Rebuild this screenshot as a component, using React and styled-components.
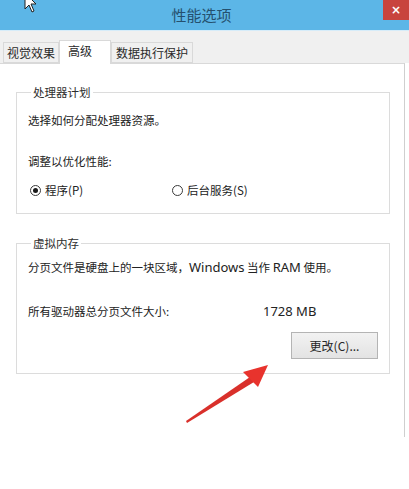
import React from "react";
import styled, { createGlobalStyle } from "styled-components";

const Global = createGlobalStyle`
  html, body { margin: 0; padding: 0; background: #ffffff; }
  body { font-family: "Noto Sans CJK SC", "Noto Sans", sans-serif; font-size: 11.5px; color: #222222; }
`;

const Window = styled.div`
  position: relative;
  width: 409px;
  height: 489px;
  background: #ffffff;
  overflow: hidden;
`;

const TitleBar = styled.div`
  height: 30px;
  background: #5cb6e7;
  border-bottom: 1px solid #d6ecf9;
  display: flex;
  align-items: center;
  justify-content: center;
  position: relative;
`;

const Title = styled.div`
  font-size: 15px;
  color: #25506e;
  line-height: 1;
  margin-left: -6px;
  margin-top: -2px;
`;

const CloseButton = styled.div`
  position: absolute;
  right: 0;
  top: 0;
  width: 26px;
  height: 20px;
  background: #c8443e;
  color: #ffffff;
  font-family: "DejaVu Sans", sans-serif;
  font-size: 12px;
  font-weight: bold;
  display: flex;
  align-items: center;
  justify-content: center;
`;

const TabStrip = styled.div`
  height: 32px;
  background: #f0f0f0;
  display: flex;
  align-items: flex-end;
  padding-left: 3px;
  position: relative;
  z-index: 1;
`;

const Tab = styled.div`
  box-sizing: border-box;
  width: ${(p) => p.$w}px;
  padding-left: ${(p) => p.$pl}px;
  height: ${(p) => (p.$active ? 24 : 21)}px;
  margin-bottom: ${(p) => (p.$active ? -1 : 0)}px;
  background: ${(p) => (p.$active ? "#ffffff" : "#f0f0f0")};
  border: 1px solid #d9d9d9;
  border-bottom: ${(p) => (p.$active ? "none" : "1px solid #d9d9d9")};
  display: flex;
  align-items: center;
  padding-bottom: ${(p) => (p.$active ? 3 : 0)}px;
  font-size: 12px;
  line-height: 1;
  color: #2a2a2a;
`;

const Panel = styled.div`
  box-sizing: border-box;
  width: 405px;
  height: 374px;
  background: #ffffff;
  border-top: 1px solid #d9d9d9;
  border-right: 1px solid #cfcfcf;
  padding: 20px 14px 0 16px;
`;

const Group = styled.fieldset`
  margin: ${(p) => p.$mt || 0}px 0 0 0;
  padding: 0 0 ${(p) => p.$pb}px 11px;
  border: 1px solid #dcdcdc;
  min-width: 0;
`;

const Legend = styled.legend`
  margin-left: 3px;
  padding: 0 2px;
  line-height: 16px;
  color: #2e2e2e;
`;

const Line = styled.div`
  line-height: 16px;
  margin-top: ${(p) => p.$mt}px;
  white-space: nowrap;
`;

const Latin = styled.span`
  font-family: "Noto Sans", "Open Sans", sans-serif;
  font-size: 13px;
`;

const RadioRow = styled.div`
  display: grid;
  grid-template-columns: 142px auto;
  margin-top: 13px;
  padding-left: 2px;
  line-height: 16px;
`;

const Option = styled.label`
  display: flex;
  align-items: center;
  gap: 4px;
`;

const RadioDot = styled.span`
  box-sizing: border-box;
  width: 11px;
  height: 11px;
  border-radius: 50%;
  border: 1px solid #3a3a3a;
  background: #ffffff;
  display: flex;
  align-items: center;
  justify-content: center;
  &::after {
    content: "";
    width: 5px;
    height: 5px;
    border-radius: 50%;
    background: ${(p) => (p.$checked ? "#1a1a1a" : "transparent")};
  }
`;

const SizeRow = styled.div`
  display: grid;
  grid-template-columns: 235px auto;
  margin-top: 28px;
  line-height: 16px;
`;

const ButtonRow = styled.div`
  display: flex;
  justify-content: flex-end;
  margin-top: 13px;
  padding-right: 11px;
`;

const Button = styled.div`
  box-sizing: border-box;
  width: 87px;
  height: 27px;
  border: 1px solid #b4b4b4;
  background: linear-gradient(#f2f2f2, #e3e3e3);
  display: flex;
  align-items: center;
  justify-content: center;
  color: #262626;
  font-size: 12px;
`;

const Cursor = styled.svg`
  position: absolute;
  left: 24px;
  top: -8px;
`;

const Arrow = styled.svg`
  position: absolute;
  left: 0;
  top: 0;
  pointer-events: none;
`;

export default function App() {
  return (
    <Window>
      <Global />
      <TitleBar>
        <Title>性能选项</Title>
        <CloseButton>×</CloseButton>
      </TitleBar>
      <TabStrip>
        <Tab $w={56} $pl={3}>视觉效果</Tab>
        <Tab $w={52} $pl={8} $active>高级</Tab>
        <Tab $w={82} $pl={4}>数据执行保护</Tab>
      </TabStrip>
      <Panel>
        <Group $pb={15}>
          <Legend>处理器计划</Legend>
          <Line $mt={12}>选择如何分配处理器资源。</Line>
          <Line $mt={25}>调整以优化性能:</Line>
          <RadioRow>
            <Option>
              <RadioDot $checked />
              程序(P)
            </Option>
            <Option>
              <RadioDot />
              后台服务(S)
            </Option>
          </RadioRow>
        </Group>
        <Group $mt={21} $pb={14}>
          <Legend>虚拟内存</Legend>
          <Line $mt={8}>
            分页文件是硬盘上的一块区域，<Latin>Windows</Latin> 当作 <Latin>RAM</Latin> 使用。
          </Line>
          <SizeRow>
            <span>所有驱动器总分页文件大小:</span>
            <Latin>1728 MB</Latin>
          </SizeRow>
          <ButtonRow>
            <Button>更改(C)...</Button>
          </ButtonRow>
        </Group>
      </Panel>
      <Cursor width="14" height="22" viewBox="0 0 14 22">
        <path d="M1 1 L1 17 L5 13 L8 20 L10 19 L7 12 L12 12 Z" fill="#ffffff" stroke="#222" strokeWidth="1" />
      </Cursor>
      <Arrow width="409" height="489" viewBox="0 0 409 489">
        <polygon points="187,423 186,421 250,377 254,382" fill="#d9302b" />
        <polygon points="268,365 243,372 258,387" fill="#e8332d" />
      </Arrow>
    </Window>
  );
}
